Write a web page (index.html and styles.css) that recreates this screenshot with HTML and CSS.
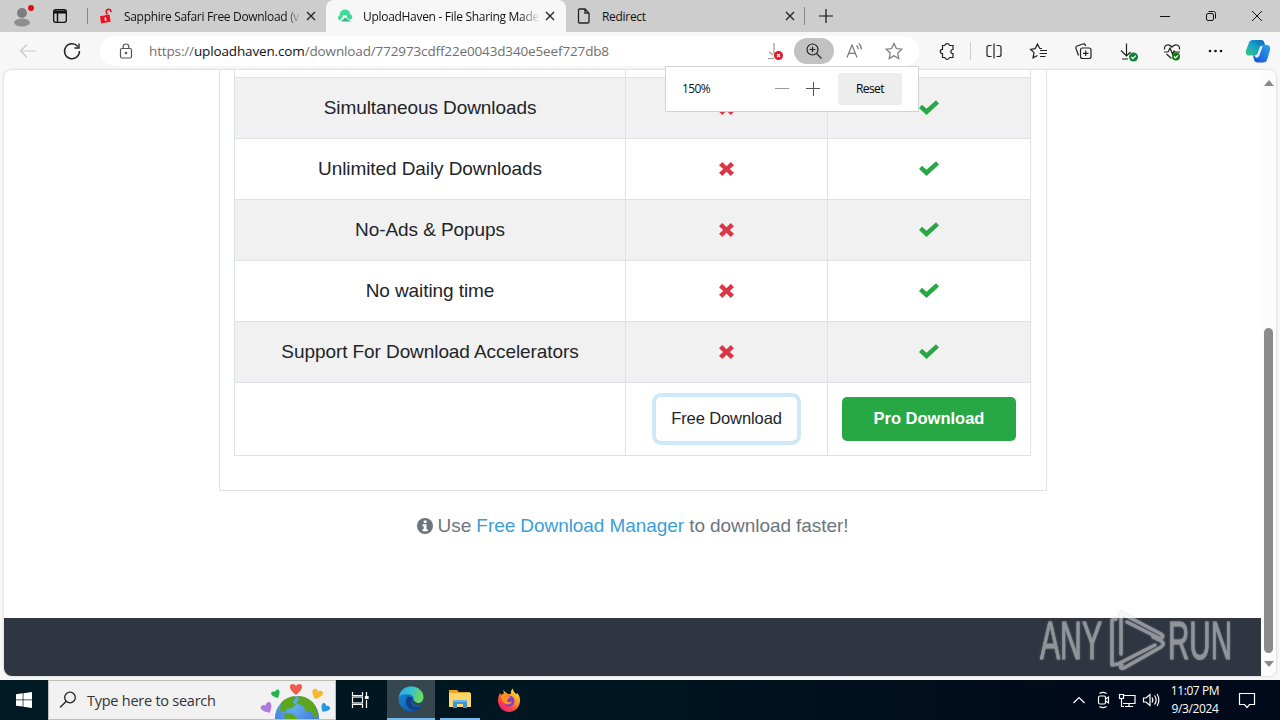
FILE: index.html
```
<!DOCTYPE html>
<html lang="en">
<head>
    <meta charset="UTF-8">
    <title>UploadHaven - File Sharing Made Easy</title>
    <link rel="stylesheet" href="styles.css">
</head>
<body>
    <div class="tabstrip">
        <div class="profile">
            <svg width="26" height="28" viewBox="0 0 26 28">
                <circle cx="14" cy="13" r="5" fill="#7d7d7d"/>
                <ellipse cx="14" cy="22.5" rx="8" ry="4" fill="#8e8e8e"/>
                <circle cx="23" cy="8" r="3" fill="#e30b17"/>
            </svg>
        </div>
        <div class="tab-actions">
            <svg width="16" height="16" viewBox="0 0 16 16" fill="none" stroke="#111" stroke-width="1.3">
                <rect x="1.7" y="1.7" width="12.6" height="12.6" rx="2"/>
                <path d="M2 3.2h12M2 4.8h12M5.5 5v9" stroke-width="1.5"/>
            </svg>
        </div>
        <div class="tab tab-first">
            <svg class="favicon" width="16" height="16" viewBox="0 0 16 16">
                <path d="M2 8.2l9.5-1.6 1.2 7.2-9.5 1.7z" fill="#ee101d"/>
                <path d="M9 6.5L8.3 4.2C8 2.3 9 1.5 10.3 1.3c1.4-.2 2.4.6 2.6 2l.1.9" fill="none" stroke="#ee101d" stroke-width="1.7"/>
                <path d="M7.200 9.500l.6 3.500" stroke="#fff" stroke-width="1.500"/>
            </svg>
            <span class="tab-title title-first">Sapphire Safari Free Download (v</span>
            <svg class="close" width="10" height="10" viewBox="0 0 10 10"><path d="M1 1l8 8M9 1l-8 8"/></svg>
        </div>
        <div class="tab tab-active">
            <svg class="favicon" width="16" height="16" viewBox="0 0 16 16">
                <path d="M3 12.500C.5 12 .3 8.500 2.500 7.500 2.500 4 5 1.500 8 1.500c3.200 0 5 2 5.200 4.800 3 1 2.500 5 0 5.500L9.800 10l.2-2.500L6.500 7 4.500 10.500z" fill="#3ddc97"/>
                <path d="M4 13.500l4-4 6 4z" fill="#35b98a"/>
            </svg>
            <span class="tab-title title-active">UploadHaven - File Sharing Made</span>
            <svg class="close" width="10" height="10" viewBox="0 0 10 10"><path d="M1 1l8 8M9 1l-8 8"/></svg>
        </div>
        <div class="tab tab-last">
            <svg class="favicon" width="16" height="18" viewBox="0 0 16 18" fill="none" stroke="#222" stroke-width="1.3">
                <path d="M2.500 3.200c0-.8.4-1.200 1.200-1.200H9l4 4.200v8.600c0 .8-.4 1.200-1.200 1.200H3.700c-.8 0-1.200-.4-1.200-1.200zM9 2v4.200h4"/>
            </svg>
            <span class="tab-title title-last">Redirect</span>
            <svg class="close" width="10" height="10" viewBox="0 0 10 10"><path d="M1 1l8 8M9 1l-8 8"/></svg>
        </div>
        <div class="new-tab">
            <svg width="14" height="14" viewBox="0 0 14 14" stroke="#111" stroke-width="1.2"><path d="M0 7h14M7 0v14"/></svg>
        </div>
        <div class="window-controls">
            <svg width="46" height="32" viewBox="0 0 46 32"><path d="M18 16.500h10"/></svg>
            <svg width="46" height="32" viewBox="0 0 46 32"><rect x="18.500" y="13.500" width="7" height="7" rx="1.500"/><path d="M20.500 11.500h5c1.300 0 2 .7 2 2v5"/></svg>
            <svg width="46" height="32" viewBox="0 0 46 32"><path d="M18 11l10 10M28 11L18 21"/></svg>
        </div>
    </div>

    <div class="toolbar">
        <svg class="tool tool-back" width="44" height="38" viewBox="0 0 44 38"><path d="M14.500 19H30M21 12.500L14.500 19l6.500 6.500"/></svg>
        <svg class="tool" width="44" height="38" viewBox="0 0 44 38"><path d="M27.800 14.500A7.500 7.500 0 1 0 29.500 19M29 11.500v4.500h-4.500" stroke-width="1.4"/></svg>
        <div class="address">
            <svg class="lock" width="14" height="16" viewBox="0 0 14 16" fill="none" stroke="#555" stroke-width="1.2">
                <rect x="1.500" y="5.500" width="11" height="9.500" rx="1.500"/>
                <path d="M4.200 5.500V3.800C4.200 2 5.300 1 7 1s2.800 1 2.800 2.800v1.700"/>
                <circle cx="7" cy="10" r=".7" fill="#555"/>
            </svg>
            <div class="url">https://<b>uploadhaven.com</b>/download/772973cdff22e0043d340e5eef727db8</div>
            <div class="address-icons">
                <svg class="addr-icon" width="40" height="26" viewBox="0 0 40 26">
                    <path d="M20 5v11M15 14l4 3M14 20.500h6" stroke="#999"/>
                    <circle cx="24.500" cy="17.500" r="4.500" fill="#e81123" stroke="none"/>
                    <path d="M23 16l3 3M26 16l-3 3" stroke="#fff"/>
                </svg>
                <svg class="addr-icon addr-zoom" width="40" height="26" viewBox="0 0 40 26">
                    <circle cx="18.500" cy="11.500" r="5.500"/><path d="M22.500 15.500l5 5M18.500 8.700v5.600M15.700 11.500h5.600"/>
                </svg>
                <svg class="addr-icon" width="40" height="26" viewBox="0 0 40 26">
                    <path d="M13 19.500L18 7l5 12.500M14.700 15.300h6.600M22.500 7.500c1.200 1 1.700 2.200 1.700 3.800M24.800 5.500c1.700 1.500 2.700 3.500 2.600 6" stroke="#777"/>
                </svg>
                <svg class="addr-icon" width="40" height="26" viewBox="0 0 40 26">
                    <path d="M20 5.500l2.400 5 5.400.7-4 3.800 1 5.500-4.800-2.700-4.800 2.700 1-5.500-4-3.800 5.400-.7z" stroke="#777"/>
                </svg>
            </div>
        </div>
        <div class="tools">
            <svg class="tool" width="44" height="38" viewBox="0 0 44 38"><path d="M17.500 13.500h2.300a2.400 2.400 0 0 1 4.700 0H28v4a2.100 2.100 0 0 0 0 4.200v3.800h-3.500a2.400 2.400 0 0 1-4.700 0h-2.300v-3.800a2.200 2.200 0 0 1 0-4.400z"/></svg>
            <div class="tool-divider"></div>
            <svg class="tool" width="44" height="38" viewBox="0 0 44 38"><path d="M19.500 13.500H17c-1.200 0-2 .8-2 2v7c0 1.200.8 2 2 2h2.500M24.500 13.500H27c1.200 0 2 .8 2 2v7c0 1.200-.8 2-2 2h-2.500M22 11.500v15"/></svg>
            <svg class="tool tool-shift" width="44" height="38" viewBox="0 0 44 38"><path d="M25 16.500h-2.200l-2.300-4.500-2.300 4.600-4.700.7 3.500 3.300-1 5.300 4.500-2.400M23 18.500h7M22.500 21.500H30M23 24.500h5.500"/></svg>
            <svg class="tool" width="44" height="38" viewBox="0 0 44 38"><rect x="19.500" y="16" width="10.500" height="10.500" rx="2"/><path d="M24.700 18.500v5.500M22 21.300h5.500M17.500 23.500l-2.500-7c-.4-1.200 0-2 1-2.500l6-2c1-.3 1.900.1 2.300 1l.3 1"/></svg>
            <svg class="tool tool-shift" width="44" height="38" viewBox="0 0 44 38"><path d="M20.500 11.500V24M15 18.500l5.500 5.500 4-4M16 27h6"/><circle cx="27.500" cy="25" r="4.500" fill="#13803b" stroke="none"/><path d="M25.300 25l1.600 1.600 2.900-3" stroke="#fff"/></svg>
            <svg class="tool" width="44" height="38" viewBox="0 0 44 38"><path d="M14.500 17.500c-.5-3 1.300-4.500 3.300-4.700 2-.1 3.300 1.200 4.200 2.200.9-1 2.200-2.300 4.200-2.200 2 .2 3.800 1.700 3.300 4.700M14 20h4l2-4 2.500 6 1.500-3 1 1h5M16.500 22l5 4.500"/><circle cx="26" cy="24.500" r="4" fill="#107c10" stroke="none"/><path d="M24 24.500l1.500 1.500 2.500-2.700" stroke="#fff"/></svg>
            <svg class="tool tool-more" width="44" height="38" viewBox="0 0 44 38"><g fill="#111" stroke="none"><circle cx="16" cy="19" r="1.300"/><circle cx="21.500" cy="19" r="1.300"/><circle cx="27" cy="19" r="1.300"/></g></svg>
            <svg class="copilot" width="26" height="26" viewBox="0 0 26 26">
                <defs>
                    <linearGradient id="cpA" x1="0" y1="1" x2="1" y2="0"><stop offset="0" stop-color="#43c56f"/><stop offset=".45" stop-color="#18a9c4"/><stop offset="1" stop-color="#0b62c4"/></linearGradient>
                    <linearGradient id="cpB" x1="0" y1="1" x2="1" y2="0"><stop offset="0" stop-color="#1a4fd8"/><stop offset="1" stop-color="#2ba4ea"/></linearGradient>
                </defs>
                <path d="M8 2h8c2 0 3 1 3.500 3l.8 3h-2.500c-2 0-3 1-3.500 3l-1.200 3.500c-.6 2-1.500 3-3.500 3H4.500c-3 0-4.200-2-3.500-5L3.500 6C4.300 3 5.500 2 8 2z" fill="url(#cpA)"/>
                <path d="M18 24.500h-5.500c-2 0-3-1-3.500-3L8 17.500h1.500c2 0 3-1 3.500-3l1.500-4.500c.6-2 1.500-3 3.500-3h3.500c3 0 4.200 2 3.500 5l-2.500 8.500c-.8 3-2 4-4.500 4z" fill="url(#cpB)"/>
                <path d="M17.500 7.500c-2 .3-2.800 1.500-3.300 3.200L13 14.500c-.6 2-1.500 3-3.500 3l1.500 2.500 3-1.500 3.200-9z" fill="#fff" opacity=".9"/>
            </svg>
        </div>
    </div>

    <div class="viewport">
        <div class="page">
            <div class="card">
                <table class="compare">
                    <tr class="row-cut"><td class="feature"></td><td class="free"></td><td class="pro"></td></tr>
                    <tr class="odd">
                        <td>Simultaneous Downloads</td>
                        <td><svg class="cross" viewBox="0 0 16 16"><use href="#cross"/></svg></td>
                        <td><svg class="check" viewBox="0 0 20 16"><use href="#check"/></svg></td>
                    </tr>
                    <tr>
                        <td>Unlimited Daily Downloads</td>
                        <td><svg class="cross" viewBox="0 0 16 16"><use href="#cross"/></svg></td>
                        <td><svg class="check" viewBox="0 0 20 16"><use href="#check"/></svg></td>
                    </tr>
                    <tr class="odd">
                        <td>No-Ads &amp; Popups</td>
                        <td><svg class="cross" viewBox="0 0 16 16"><use href="#cross"/></svg></td>
                        <td><svg class="check" viewBox="0 0 20 16"><use href="#check"/></svg></td>
                    </tr>
                    <tr>
                        <td>No waiting time</td>
                        <td><svg class="cross" viewBox="0 0 16 16"><use href="#cross"/></svg></td>
                        <td><svg class="check" viewBox="0 0 20 16"><use href="#check"/></svg></td>
                    </tr>
                    <tr class="odd">
                        <td>Support For Download Accelerators</td>
                        <td><svg class="cross" viewBox="0 0 16 16"><use href="#cross"/></svg></td>
                        <td><svg class="check" viewBox="0 0 20 16"><use href="#check"/></svg></td>
                    </tr>
                    <tr class="row-buttons">
                        <td></td>
                        <td><button class="btn btn-free">Free Download</button></td>
                        <td><button class="btn btn-pro">Pro Download</button></td>
                    </tr>
                </table>
            </div>
            <p class="hint">
                <svg width="16" height="16" viewBox="0 0 16 16">
                    <circle cx="8" cy="8" r="8" fill="#6c757d"/>
                    <path d="M6.700 2.500h2.800V5H6.700zM5.500 6.300h4v5h1.200v1.900H5.500v-1.900h1.200V8.200H5.500z" fill="#fff"/>
                </svg>
                <span>Use <a href="#">Free Download Manager</a> to download faster!</span>
            </p>
            <div class="footer"></div>
        </div>
        <div class="scrollbar">
            <svg width="10" height="6" viewBox="0 0 10 6"><path d="M5 0l5 6H0z" fill="#8a8a8a"/></svg>
            <div class="thumb"></div>
            <svg width="10" height="6" viewBox="0 0 10 6"><path d="M0 0h10L5 6z" fill="#8a8a8a"/></svg>
        </div>
    </div>

    <div class="zoom-popup">
        <span class="zoom-value">150%</span>
        <svg class="zoom-minus" width="14" height="14" viewBox="0 0 14 14"><path d="M0 6.500h14" stroke="#999"/></svg>
        <svg class="zoom-plus" width="14" height="14" viewBox="0 0 14 14"><path d="M0 6.500h14M7.500 0v14" stroke="#555"/></svg>
        <button class="zoom-reset">Reset</button>
    </div>

    <svg class="watermark" width="210" height="66" viewBox="0 0 210 66">
        <text x="3" y="51" textLength="62" lengthAdjust="spacingAndGlyphs">ANY</text>
        <g fill="none" stroke-width="3.5" stroke-linejoin="round" stroke-linecap="round">
            <path d="M79 11l-4 1v45l6-1 37-19"/>
            <path d="M84 46V5l40 21c3 2 2 5-2 4L90 14"/>
            <path d="M116 29l8 4c3 2 3 4 0 6L87 60c-3 1-5-1-2-3"/>
        </g>
        <text x="131" y="51" textLength="64" lengthAdjust="spacingAndGlyphs">RUN</text>
    </svg>

    <div class="taskbar">
        <div class="start">
            <svg width="16" height="16" viewBox="0 0 16 16" fill="#fff"><path d="M0 2.300l6.700-1v6.300H0zM7.400 1.200L16 0v7.600H7.400zM0 8.300h6.700v6.300L0 13.700zM7.400 8.300H16V16l-8.600-1.200z"/></svg>
        </div>
        <div class="search">
            <svg width="18" height="18" viewBox="0 0 18 18" fill="none" stroke="#222" stroke-width="1.3"><circle cx="11" cy="6.500" r="5.300"/><path d="M7.300 10.300L1 16.500"/></svg>
            <span>Type here to search</span>
            <svg class="doodle" width="72" height="38" viewBox="0 0 72 38">
                <defs>
                    <radialGradient id="sea" cx=".4" cy=".2" r=".8"><stop offset="0" stop-color="#65b7ef"/><stop offset="1" stop-color="#3b62dd"/></radialGradient>
                    <path id="heart" d="M0 6C-8 0-7-5-3.500-5c2 0 3 1 3.500 2 .5-1 1.500-2 3.500-2C7-5 8 0 0 6z"/>
                </defs>
                <circle cx="37" cy="37" r="22" fill="url(#sea)"/>
                <path d="M21 22c3-4 8-6 13-7l2 2-3 4 3 3-4 3-5 1-2 3-5-1zM38 15c8 0 14 4 18 11l2 11h-4l-2-6-6-1-3-5-7-3 3-3zM24 32l8 1 5 4v1H25z" fill="#5ca51d"/>
                <use href="#heart" transform="translate(36 8)" fill="#ef5c50"/>
                <use href="#heart" transform="translate(16 13) rotate(-25) scale(.72)" fill="#27b254"/>
                <use href="#heart" transform="translate(57 13) rotate(20) scale(.88)" fill="#f6b82c"/>
                <use href="#heart" transform="translate(7 27) rotate(-30) scale(.92)" fill="#ad79dc"/>
                <use href="#heart" transform="translate(65 27) rotate(35) scale(.75)" fill="#2b98de"/>
            </svg>
        </div>
        <div class="task task-view">
            <svg width="18" height="18" viewBox="0 0 18 18" fill="none" stroke="#fff" stroke-width="1.2"><path d="M1.500 1v3.500h10V1M1.500 17v-3.500h10V17"/><rect x="1.500" y="6" width="10" height="6"/><path d="M15.500 1v4M15.500 9v8"/><path d="M14.500 5.500h2.500v2h-2.500z" fill="#fff"/></svg>
        </div>
        <div class="task task-edge">
            <svg width="26" height="26" viewBox="0 0 26 26">
                <defs>
                    <linearGradient id="edgeTop" x1="0" y1="0" x2="1" y2=".3"><stop offset="0" stop-color="#2aa8e2"/><stop offset=".5" stop-color="#36bfd0"/><stop offset="1" stop-color="#6bdc5c"/></linearGradient>
                    <linearGradient id="edgeLow" x1="0" y1="0" x2="1" y2="1"><stop offset="0" stop-color="#1b8be0"/><stop offset="1" stop-color="#0d4f9e"/></linearGradient>
                </defs>
                <circle cx="13" cy="13" r="12.500" fill="url(#edgeLow)"/>
                <path d="M1 11C2 4.500 7 .5 13 .5c7.500 0 12.500 5 12.500 10.500 0 4-3 6.500-6.500 6.500-3 0-4.500-1-4-2.500 1.500-2 1-6-4-6.500C7 8 2.500 8.500 1 11z" fill="url(#edgeTop)"/>
                <path d="M9.500 11c-4 5 0 13 7 13 3 0 5.500-1 7.500-4-3 1.500-8 1.500-10-1.500-1.400-2-.5-3.500 1-4.500-1-3-3.500-4-5.500-3z" fill="#123f85"/>
                <path d="M15 13.500c-1 2-.5 4.500 2 5.500s5.500.5 8-1.500l-1.500 3.500h2.500v-6c-3 3-8 3-11-1.500z" fill="#35464f"/>
            </svg>
        </div>
        <div class="task task-files">
            <svg width="24" height="20" viewBox="0 0 24 20">
                <path d="M1 1h8l2 2h11v15H1z" fill="#e9a520"/>
                <path d="M1 4h22v14H1z" fill="#fcd56b"/>
                <path d="M5 19v-8h14v8h-4v-4H9v4z" fill="#3f95d8"/>
                <path d="M5 11h14v2H5z" fill="#67b8ea"/>
            </svg>
        </div>
        <div class="task task-firefox">
            <svg width="24" height="24" viewBox="0 0 24 24">
                <defs><linearGradient id="fox" x1=".9" y1="0" x2=".2" y2="1"><stop offset="0" stop-color="#fff14f"/><stop offset=".4" stop-color="#ff9a24"/><stop offset=".75" stop-color="#ff3a4a"/><stop offset="1" stop-color="#e3188f"/></linearGradient></defs>
                <path d="M3 5l1 2 3-2-1-3 5 4 3 0c-.5-2.500.5-4.500 2-5.500 0 3 2 4 3.500 6l.5-2c2 2.500 3 5 3 8 0 6.500-5 11.500-11 11.500S1 19 1 12.500C1 9.500 2 7 3 5z" fill="url(#fox)"/>
                <circle cx="12" cy="13" r="5.500" fill="#7a3fd6"/>
                <path d="M4 8l4-2 3 2 3 1-3 2-1 2c2 2 4 1 5 0 0 3-4 4-6 3-3-1-5-5-5-8z" fill="#ff9222"/>
            </svg>
        </div>
        <div class="tray">
            <svg width="24" height="40" viewBox="0 0 24 40"><path d="M6.500 23l5.500-5.500 5.500 5.500"/></svg>
            <svg width="24" height="40" viewBox="0 0 24 40"><rect x="7.500" y="16" width="7" height="8" rx="1.500"/><path d="M14.500 19l3-2v6l-3-2M8.500 13.500c2-1.300 5-1.300 7 0M8.500 26.500c2 1.300 5 1.300 7 0"/></svg>
            <svg width="24" height="40" viewBox="0 0 24 40"><path d="M8 15.500h12v8H8M14 24v2.500M10 26.500h8M4.500 14.500h4v4h-4zM6.500 18.500v8H9"/></svg>
            <svg width="24" height="40" viewBox="0 0 24 40"><path d="M4.500 18h2.500l4-3.500v11L7 22H4.500zM13 17.500c1 1.500 1 3.500 0 5M15.500 15.500c2 2.700 2 6.300 0 9M18 14c2.500 3.500 2.500 8.500 0 12"/></svg>
            <div class="clock">
                <div class="time">11:07 PM</div>
                <div class="date">9/3/2024</div>
            </div>
            <svg class="action-center" width="18" height="18" viewBox="0 0 18 18"><path d="M1.500 2.500h15v11h-5L9 16.500l-2.500-3h-5z"/></svg>
        </div>
    </div>

    <svg class="symbols">
        <symbol id="cross" viewBox="0 0 16 16"><path d="M0 3.500L3.500 0 8 4.500 12.500 0 16 3.500 11.500 7.500 16 11.500 12.500 15 8 10.500 3.500 15 0 11.500 4.500 7.500z" fill="#dc3545"/></symbol>
        <symbol id="check" viewBox="0 0 20 16"><path d="M0 8l3-3.200 4.500 4L17 .3l3 3.200L7.500 15z" fill="#28a745"/></symbol>
    </svg>
</body>
</html>
```

FILE: styles.css
```
body {
    margin: 0;
    width: 1280px;
    height: 720px;
    overflow: hidden;
    display: flex;
    flex-direction: column;
    background: #f7f7f7;
    font-family: "Open Sans", "Noto Sans", sans-serif;
    color: #111;
}

svg {
    display: block;
    flex: none;
}

.symbols {
    display: none;
}

/* tabs */
.tabstrip {
    display: flex;
    height: 32px;
    flex: none;
    background: #cdcdcd;
}

.profile {
    width: 34px;
    padding-left: 8px;
}

.tab-actions {
    width: 46px;
    height: 16px;
    margin-top: 8px;
    padding-left: 10px;
    box-sizing: border-box;
    border-right: 1px solid #888;
    margin-right: 4px;
}

.tab {
    display: flex;
    align-items: center;
    box-sizing: border-box;
    width: 240px;
    padding: 0 11px;
    font-size: 12px;
}

.tab-first {
    width: 234px;
    padding: 0 10px 0 6px;
}

.tab-active {
    background: #f7f7f7;
    border-radius: 8px 8px 0 0;
}

.tab-last {
    position: relative;
    padding-left: 10px;
}

.tab-last::after {
    content: "";
    position: absolute;
    right: 1px;
    top: 7px;
    width: 1px;
    height: 18px;
    background: #888;
}

.favicon {
    margin-right: 10px;
}

.tab-title {
    flex: 1;
    white-space: nowrap;
}

.title-first {
    letter-spacing: -0.32px;
    -webkit-mask-image: linear-gradient(to right, #000 162px, transparent 178px);
    mask-image: linear-gradient(to right, #000 162px, transparent 178px);
}

.title-active {
    letter-spacing: -0.3px;
    -webkit-mask-image: linear-gradient(to right, #000 157px, transparent 177px);
    mask-image: linear-gradient(to right, #000 157px, transparent 177px);
}

.title-last {
    letter-spacing: -0.3px;
}

.close {
    fill: none;
    stroke: #222;
    stroke-width: 1.3;
    margin-left: 6px;
}

.new-tab {
    padding: 9px 0 0 13px;
}

.window-controls {
    display: flex;
    margin-left: auto;
    fill: none;
    stroke: #111;
}

/* address bar */
.toolbar {
    display: flex;
    align-items: center;
    height: 38px;
    flex: none;
    padding-left: 6px;
}

.tool {
    fill: none;
    stroke: #222;
    stroke-width: 1.2;
}

.tool-back {
    stroke: #c9c9c9;
}

.address {
    display: flex;
    align-items: center;
    width: 819px;
    height: 30px;
    margin-left: 6px;
    border-radius: 15px;
    background: #fff;
}

.lock {
    margin: 0 16px 0 19px;
}

.url {
    font-size: 13.5px;
    letter-spacing: -0.14px;
    color: #707070;
    white-space: nowrap;
}

.url b {
    font-weight: normal;
    color: #111;
}

.address-icons {
    display: flex;
    margin-left: auto;
    margin-right: 5px;
}

.addr-icon {
    fill: none;
    stroke: #222;
    stroke-width: 1.2;
}

.addr-zoom {
    background: #c2c2c2;
    border-radius: 13px;
}

.tools {
    display: flex;
    align-items: center;
    margin-left: 6px;
}

.tool-divider {
    width: 1px;
    height: 18px;
    margin: 0 1px;
    background: #ccc;
}

.tool-shift {
    margin-left: 1px;
}

.copilot {
    margin-left: 7px;
}

/* web page */
.viewport {
    display: flex;
    flex: none;
    width: 1272px;
    height: 606px;
    margin: 0 4px;
    border-radius: 8px;
    overflow: hidden;
    background: #fff;
    box-shadow: 0 0 3px rgba(0, 0, 0, 0.2);
}

.page {
    width: 1257px;
    font-family: "Liberation Sans", Arial, sans-serif;
}

.card {
    box-sizing: border-box;
    width: 828px;
    height: 421px;
    margin-left: 215px;
    padding: 0 14px;
    border: 1px solid #dee2e6;
    border-top: none;
}

.compare {
    width: 797px;
    table-layout: fixed;
    border-collapse: separate;
    border-spacing: 0;
    border-left: 1px solid #dee2e6;
    font-size: 19px;
    letter-spacing: -0.08px;
    color: #212529;
}

.compare td {
    box-sizing: border-box;
    height: 61px;
    padding: 0;
    text-align: center;
    border-right: 1px solid #dee2e6;
    border-bottom: 1px solid #dee2e6;
}

.compare .row-cut td {
    height: 8px;
}

.compare .feature {
    width: 391px;
}

.compare .free {
    width: 202px;
}

.compare .pro {
    width: 203px;
}

.compare .odd td {
    background: #f1f1f1;
}

.compare .row-buttons td {
    height: 73px;
}

.cross {
    width: 15px;
    height: 15px;
    margin: 0 auto;
}

.check {
    width: 20px;
    height: 16px;
    margin: 0 auto;
}

.btn {
    display: block;
    height: 44px;
    margin: 0 auto;
    padding: 0 0 2px;
    border: none;
    border-radius: 5px;
    font-family: inherit;
    font-size: 16.5px;
}

.btn-free {
    width: 141px;
    background: #fff;
    color: #212529;
    letter-spacing: -0.1px;
    box-shadow: 0 0 0 4px #cfe8f7;
}

.btn-pro {
    width: 174px;
    background: #28a745;
    color: #fff;
    font-weight: bold;
}

.hint {
    display: flex;
    align-items: center;
    justify-content: center;
    gap: 5px;
    width: 827px;
    height: 28px;
    margin: 21px 0 0 215px;
    font-size: 19px;
    letter-spacing: -0.07px;
    color: #6c757d;
}

.hint a {
    color: #3a9fd8;
    text-decoration: none;
}

.footer {
    height: 58px;
    margin-top: 78px;
    background: #303641;
}

.scrollbar {
    display: flex;
    flex-direction: column;
    align-items: center;
    justify-content: space-between;
    box-sizing: border-box;
    width: 15px;
    padding: 10px 0 9px;
    background: #fcfcfc;
}

.thumb {
    width: 9px;
    height: 325px;
    margin-top: auto;
    margin-bottom: 8px;
    border-radius: 5px;
    background: #8b8b8b;
}

/* zoom flyout over the page */
.zoom-popup {
    position: absolute;
    left: 665px;
    top: 66px;
    display: flex;
    align-items: center;
    box-sizing: border-box;
    width: 254px;
    height: 46px;
    padding: 0 16px;
    background: #fff;
    border: 1px solid #d2d2d2;
    font-size: 12px;
}

.zoom-value {
    width: 93px;
    margin-top: -2px;
    letter-spacing: -0.6px;
}

.zoom-plus {
    margin-left: 17px;
}

.zoom-reset {
    width: 64px;
    height: 32px;
    margin-left: auto;
    padding: 0 0 2px;
    border: none;
    border-radius: 3px;
    background: #ededed;
    font-family: inherit;
    font-size: 12px;
    letter-spacing: -0.6px;
}

.watermark {
    position: absolute;
    left: 1037px;
    top: 608px;
    opacity: 0.5;
    fill: #f2f2f2;
    stroke: #f2f2f2;
    filter: drop-shadow(0 0 1px #999);
    font-family: "Liberation Sans", Arial, sans-serif;
    font-size: 53px;
}

.watermark text {
    stroke-width: 0.8;
}

/* taskbar */
.taskbar {
    display: flex;
    height: 40px;
    margin-top: 4px;
    flex: none;
    background: linear-gradient(to right, #001a23, #001521 50%, #000a1a 85%);
}

.start {
    width: 48px;
    display: flex;
    align-items: center;
    justify-content: center;
}

.search {
    display: flex;
    align-items: center;
    box-sizing: border-box;
    width: 288px;
    padding-left: 10px;
    background: #f1f1f1;
    border: 1px solid #b9c0b5;
    font-size: 14.5px;
    letter-spacing: -0.25px;
    color: #333;
}

.search span {
    margin-left: 10px;
    white-space: nowrap;
}

.doodle {
    margin-left: auto;
    margin-right: 3px;
}

.task {
    display: flex;
    align-items: center;
    justify-content: center;
    box-sizing: border-box;
    width: 48px;
}

.task-edge {
    margin-left: 3px;
    background: #35464f;
    border-bottom: 2px solid #76b9ed;
}

.task-files {
    width: 40px;
    margin-left: 5px;
    border-bottom: 2px solid #76b9ed;
}

.task-firefox {
    margin-left: 5px;
}

.tray {
    display: flex;
    align-items: center;
    margin-left: auto;
    padding-right: 24px;
    fill: none;
    stroke: #fff;
    stroke-width: 1.2;
}

.clock {
    width: 64px;
    margin: 0 11px 0 0;
    font-size: 12px;
    line-height: 18px;
    text-align: center;
    color: #fff;
    letter-spacing: -0.4px;
}
```
